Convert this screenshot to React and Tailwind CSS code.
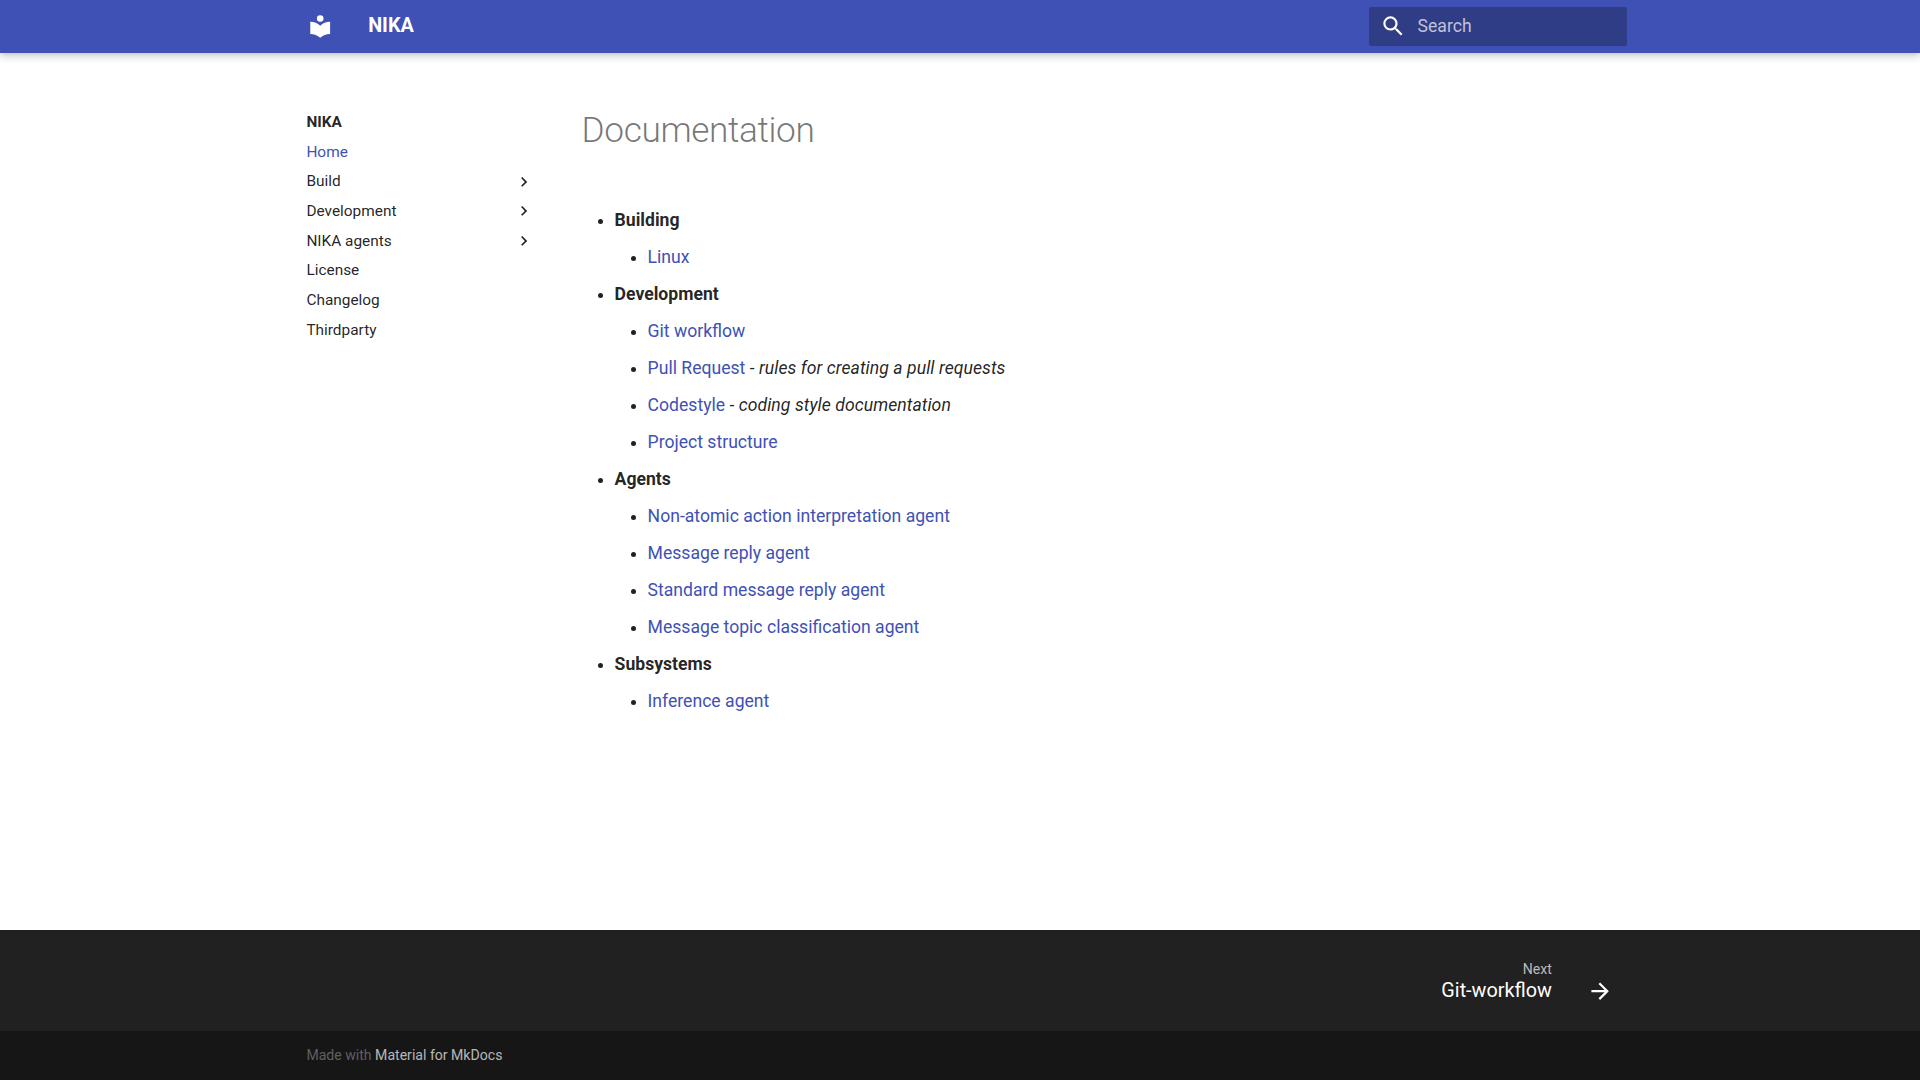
const nav = [
  ["Home", false, true],
  ["Build", true],
  ["Development", true],
  ["NIKA agents", true],
  ["License"],
  ["Changelog"],
  ["Thirdparty"],
];

const sections = [
  ["Building", [["Linux"]]],
  [
    "Development",
    [
      ["Git workflow"],
      ["Pull Request", "rules for creating a pull requests"],
      ["Codestyle", "coding style documentation"],
      ["Project structure"],
    ],
  ],
  [
    "Agents",
    [
      ["Non-atomic action interpretation agent"],
      ["Message reply agent"],
      ["Standard message reply agent"],
      ["Message topic classification agent"],
    ],
  ],
  ["Subsystems", [["Inference agent"]]],
];

function Icon({ d, className }) {
  return (
    <svg viewBox="0 0 24 24" className={className} fill="currentColor">
      <path d={d} />
    </svg>
  );
}

const BOOK =
  "M12 8a3 3 0 0 0 3-3 3 3 0 0 0-3-3 3 3 0 0 0-3 3 3 3 0 0 0 3 3m0 3.54C9.64 9.35 6.5 8 3 8v11c3.5 0 6.64 1.35 9 3.54 2.36-2.19 5.5-3.54 9-3.54V8c-3.5 0-6.64 1.35-9 3.54Z";
const SEARCH =
  "M9.5 3A6.5 6.5 0 0 1 16 9.5c0 1.61-.59 3.09-1.56 4.23l.27.27h.79l5 5-1.5 1.5-5-5v-.79l-.27-.27A6.516 6.516 0 0 1 9.5 16 6.5 6.5 0 0 1 3 9.5 6.5 6.5 0 0 1 9.5 3m0 2C7 5 5 7 5 9.5S7 14 9.5 14 14 12 14 9.5 12 5 9.5 5Z";
const CHEVRON = "M8.59 16.58 13.17 12 8.59 7.41 10 6l6 6-6 6-1.41-1.42Z";
const ARROW =
  "M4 11v2h12l-5.5 5.5 1.42 1.42L19.84 12l-7.92-7.92L10.5 5.5 16 11H4Z";

export default function App() {
  return (
    <div className="flex h-[1080px] flex-col bg-white font-['Roboto',sans-serif] text-[17.6px] leading-[28.16px] text-black/87 antialiased">
      <header className="relative z-10 h-[52.8px] shrink-0 bg-[#4051b5] text-white shadow-[0_0_4.4px_#0000001a,0_4.4px_8.8px_#0003]">
        <div className="mx-auto flex h-full w-[1342px] items-center px-[4.4px]">
          <a className="m-[4.4px] p-[8.8px]">
            <Icon d={BOOK} className="size-[26.4px]" />
          </a>
          <div className="ml-[22px] mr-[8.8px] grow text-[19.8px] font-bold leading-[52.8px]">
            NIKA
          </div>
          <div className="flex h-[39.6px] w-[257.4px] items-center rounded-[2.2px] bg-black/26 pl-[11.2px]">
            <Icon d={SEARCH} className="size-[26.4px]" />
            <span className="ml-[10.8px] text-[17.6px] text-white/70">Search</span>
          </div>
        </div>
      </header>

      <main className="mx-auto flex w-[1342px] grow pt-[33px]">
        <nav className="w-[266.2px] shrink-0 pt-[26.4px] text-[15.4px] leading-[20.02px]">
          <div className="pl-[17.4px] font-bold">NIKA</div>
          <ul className="pl-[17.4px] pr-[21.4px]">
            {nav.map(([label, more, active]) => (
              <li key={label} className="mt-[9.625px] flex items-center justify-between">
                <a className={active ? "text-[#4051b5]" : ""}>{label}</a>
                {more && <Icon d={CHEVRON} className="-my-1 size-[19.8px]" />}
              </li>
            ))}
          </ul>
        </nav>
        <article className="ml-[26.4px] pt-[13.2px]">
          <h1 className="mt-[8.8px] mb-[52.8px] text-[35.2px] font-light leading-[45.76px] tracking-[-0.01em] text-black/54">
            Documentation
          </h1>
          <ul className="list-disc">
            {sections.map(([title, items]) => (
              <li key={title} className="mb-[8.8px] ml-[33px]">
                <strong>{title}</strong>
                <ul className="mt-[8.8px] list-disc">
                  {items.map(([label, note]) => (
                    <li key={label} className="mb-[8.8px] ml-[33px]">
                      <a className="text-[#4051b5]">{label}</a>
                      {note && (
                        <>
                          {" - "}
                          <em className="tracking-[0.06px]">{note}</em>
                        </>
                      )}
                    </li>
                  ))}
                </ul>
              </li>
            ))}
          </ul>
        </article>
      </main>

      <footer className="shrink-0 bg-black/87 text-white">
        <div className="mx-auto flex h-[101.2px] w-[1342px] items-end justify-end px-[4.4px] pb-[13.2px]">
          <div className="pb-[15.4px] text-right text-[19.8px]">
            <div className="text-[14.08px] leading-[22.5px] text-white/70">Next</div>
            <div className="leading-[22px]">Git-workflow</div>
          </div>
          <div className="m-[4.4px] ml-[26.4px] p-[8.8px]">
            <Icon d={ARROW} className="size-[26.4px]" />
          </div>
        </div>
        <div className="bg-black/32">
          <div className="mx-auto h-[49px] w-[1342px] px-[17.4px] pt-[13px] text-[14.08px] leading-[22.53px] text-white/32">
            Made with <a className="text-white/70">Material for MkDocs</a>
          </div>
        </div>
      </footer>
    </div>
  );
}
